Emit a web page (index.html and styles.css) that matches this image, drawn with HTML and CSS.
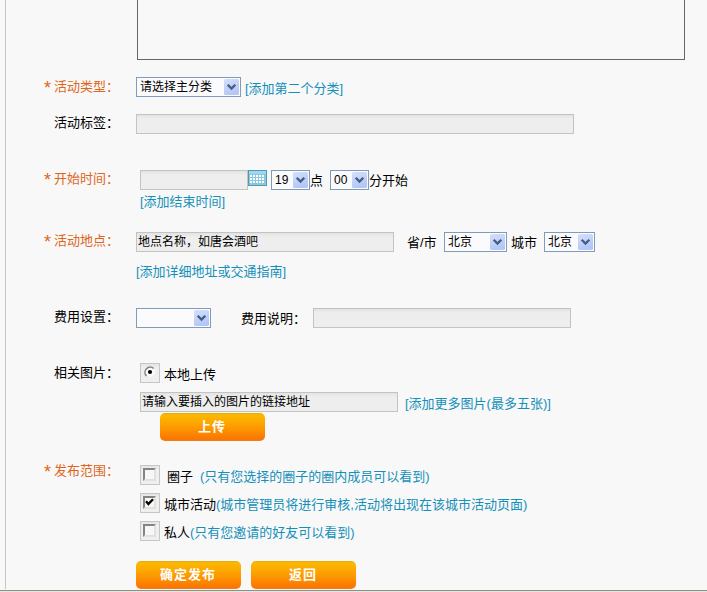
FILE: index.html
```html
<!DOCTYPE html>
<html lang="zh-CN">
<head>
<meta charset="utf-8">
<title>发布活动</title>
<link rel="stylesheet" href="styles.css">
</head>
<body>
<svg class="defs" width="0" height="0" aria-hidden="true">
  <defs>
    <linearGradient id="arrow-bg" x1="0" y1="0" x2="0.4" y2="1">
      <stop offset="0" stop-color="#d5e0fb"/><stop offset="1" stop-color="#b3c6f5"/>
    </linearGradient>
    <symbol id="arrow" viewBox="0 0 15 16">
      <rect x="0" y="0" width="15" height="16" rx="1.5" fill="url(#arrow-bg)"/>
      <path d="M3.7 5.7 7.5 9.5l3.8-3.8" fill="none" stroke="#435e85" stroke-width="2.3"/>
    </symbol>
  </defs>
</svg>
<form class="page">
  <div class="content">
  <textarea class="editor" readonly></textarea>

  <div class="row type">
    <div class="label required"><b class="star">*</b>活动类型<span class="colon">：</span></div>
    <div class="line">
      <div class="select w105"><span>请选择主分类</span><svg><use href="#arrow"/></svg></div>
      <a class="gap4">[添加第二个分类]</a>
    </div>
  </div>

  <div class="row tags">
    <div class="label">活动标签<span class="colon">：</span></div>
    <input class="field w438">
  </div>

  <div class="row time">
    <div class="label required"><b class="star">*</b>开始时间<span class="colon">：</span></div>
    <div class="indent">
      <div class="line">
        <input class="field w108">
        <svg class="calendar" width="19" height="16" viewBox="0 0 19 16" shape-rendering="crispEdges">
          <path fill="#4f9ab8" d="M0 0h19v16H0z"/>
          <path fill="#9bd8f0" d="M1 1h17v3H1z"/>
          <path fill="#8cc8dd" d="M1 4h17v11H1z"/>
          <path d="M2 6h15M2 9h15M2 12h15" stroke="#fff" stroke-width="2" stroke-dasharray="2 1"/>
        </svg>
        <div class="select w39 gap4"><span>19</span><svg><use href="#arrow"/></svg></div>
        <span class="text point">点</span>
        <div class="select w39"><span>00</span><svg><use href="#arrow"/></svg></div>
        <span class="text">分开始</span>
      </div>
      <a class="end-time">[添加结束时间]</a>
    </div>
  </div>

  <div class="row place">
    <div class="label required"><b class="star">*</b>活动地点<span class="colon">：</span></div>
    <div>
      <div class="line">
        <input class="field w258" value="地点名称，如唐会酒吧">
        <span class="text province">省/市</span>
        <div class="select w63"><span>北京</span><svg><use href="#arrow"/></svg></div>
        <span class="text city">城市</span>
        <div class="select w51"><span>北京</span><svg><use href="#arrow"/></svg></div>
      </div>
      <a class="address">[添加详细地址或交通指南]</a>
    </div>
  </div>

  <div class="row cost">
    <div class="label">费用设置<span class="colon">：</span></div>
    <div class="line">
      <div class="select w75"><span></span><svg><use href="#arrow"/></svg></div>
      <span class="text note">费用说明<span class="colon">：</span></span>
      <input class="field w258">
    </div>
  </div>

  <div class="row images">
    <div class="label">相关图片<span class="colon">：</span></div>
    <div class="indent">
      <div class="line">
        <span class="box"><svg width="18" height="18" viewBox="0 0 18 18">
          <circle cx="9" cy="8" r="5" fill="#fafafa"/>
          <path d="M5.5 12A5.2 5.2 0 0 1 12.7 4.5" fill="none" stroke="#858585" stroke-width="1.6"/>
          <circle cx="9" cy="8" r="2.1" fill="#000"/>
        </svg></span>
        <span class="text gap4">本地上传</span>
      </div>
      <div class="line link-line">
        <input class="field w258" value="请输入要插入的图片的链接地址">
        <a class="more">[添加更多图片(最多五张)]</a>
      </div>
      <button type="button" class="button upload">上传</button>
    </div>
  </div>

  <div class="row scope">
    <div class="label required"><b class="star">*</b>发布范围<span class="colon">：</span></div>
    <div class="indent options">
      <div class="line">
        <span class="box"><i class="check"></i></span>
        <span class="text circle">圈子</span><a>(只有您选择的圈子的圈内成员可以看到)</a>
      </div>
      <div class="line">
        <span class="box"><i class="check"><svg width="9" height="9" viewBox="0 0 9 9"><path d="M1 3.2 3.4 6 8 1.3" fill="none" stroke="#000" stroke-width="2.3"/></svg></i></span>
        <span class="text gap4">城市活动</span><a>(城市管理员将进行审核,活动将出现在该城市活动页面)</a>
      </div>
      <div class="line">
        <span class="box"><i class="check"></i></span>
        <span class="text gap4">私人</span><a>(只有您邀请的好友可以看到)</a>
      </div>
    </div>
  </div>

  <div class="actions">
    <button type="button" class="button">确定发布</button>
    <button type="button" class="button">返回</button>
  </div>
  </div>
</form>
</body>
</html>
```
FILE: styles.css
```css
* { box-sizing: border-box; }
body {
  margin: 0;
  height: 592px;
  overflow: hidden;
  background: #f8f8f8;
  color: #000;
  font: 13px/20px "Liberation Sans", "Noto Sans CJK SC", sans-serif;
  white-space: nowrap;
}
.defs { display: block; height: 0; }
.page {
  height: 592px;
  border-bottom: 1px solid #e8e6dc;
  box-shadow: inset 0 -1px 0 #8f8f8a;
  overflow: hidden;
}
.content {
  height: 589px;
  margin-left: 5px;
  border-left: 1px solid #c4c4c4;
}
.editor {
  display: block;
  width: 548px;
  height: 60px;
  margin: 0 0 17px 131px;
  padding: 0;
  border: 1px solid #666;
  border-top: 0;
  background: #f8f8f8;
  resize: none;
}
.row { display: flex; align-items: flex-start; }
.label {
  width: 113px;
  margin: -1px 17px 0 0;
  text-align: right;
  flex: none;
}
.required { color: #e0651a; }
.star { margin-right: 3px; font-size: 18px; font-weight: normal; line-height: 1px; vertical-align: -3px; }
.colon { position: relative; left: 0; }
.line { display: flex; height: 20px; }
.indent { margin-left: 4px; }
.gap4 { margin-left: 4px; }
a { color: #1590b8; position: relative; top: 2px; }
.text { position: relative; top: 2px; }

.type { height: 37px; }
.type .label, .images .label { margin-top: 0; }
.tags { height: 56px; }
.time { height: 62px; }
.place { height: 76px; }
.cost { height: 55px; }
.images { height: 102px; }
.scope { height: 96px; }
.scope .label { margin-top: -4px; }

.field {
  height: 20px;
  margin: 0;
  padding: 0 2px 3px;
  border: 1px solid #c3c3c3;
  border-radius: 0;
  background: linear-gradient(#e3e3e3, #eee 4px);
  color: #000;
  font: 12px/16px "Liberation Sans", "Noto Sans CJK SC", sans-serif;
}
.w258.field { padding-left: 1px; }
.select {
  display: flex;
  justify-content: space-between;
  height: 20px;
  padding: 1px 1px 1px 3px;
  border: 1px solid #7f9db9;
  background: #fbfbfd;
  font-size: 12px;
  line-height: 16px;
}
.select svg { width: 15px; height: 16px; flex: none; }
.w39 { width: 39px; }
.w51 { width: 51px; }
.w63 { width: 63px; }
.w75 { width: 75px; }
.w105 { width: 105px; }
.w108 { width: 108px; }
.w258 { width: 258px; }
.w438 { width: 438px; }

.point { width: 20px; }
.time .text, .place .text, .cost .text { top: 1px; }
.end-time, .address { display: block; }
.address { top: 10px; }
.province { width: 50px; padding-left: 13px; }
.city { width: 37px; padding-left: 4px; }
.note { width: 102px; padding-left: 30px; }
.link-line { margin-top: 9px; }
.more { margin-left: 7px; }

.box {
  display: block;
  width: 20px;
  height: 20px;
  border: 1px solid #c6c6c6;
  background: linear-gradient(#e5e5e5, #efefef 4px);
}
.box svg { display: block; }
.check {
  display: block;
  width: 13px;
  height: 13px;
  margin: 2px 0 0 2px;
  border: 2px solid #e2e2dc;
  border-top-color: #858585;
  border-left-color: #858585;
  background: #f7f7f7;
}
.check svg { display: block; }
.options { display: flex; flex-direction: column; gap: 8px; }
.circle { width: 40px; padding-left: 7px; }

.button {
  display: block;
  width: 105px;
  height: 28px;
  padding: 0 0 1px;
  border: 0;
  border-radius: 5px;
  background: linear-gradient(#e6a918, #fbb900 2px, #fd9b00 50%, #fb7600 26px, #ef7d1d);
  color: #fff;
  font: bold 13px/27px "Liberation Sans", "Noto Sans CJK SC", sans-serif;
  letter-spacing: 1px;
  text-indent: -1px;
}
.upload { margin: 1px 0 0 20px; }
.actions { display: flex; gap: 10px; margin-left: 130px; }
```
